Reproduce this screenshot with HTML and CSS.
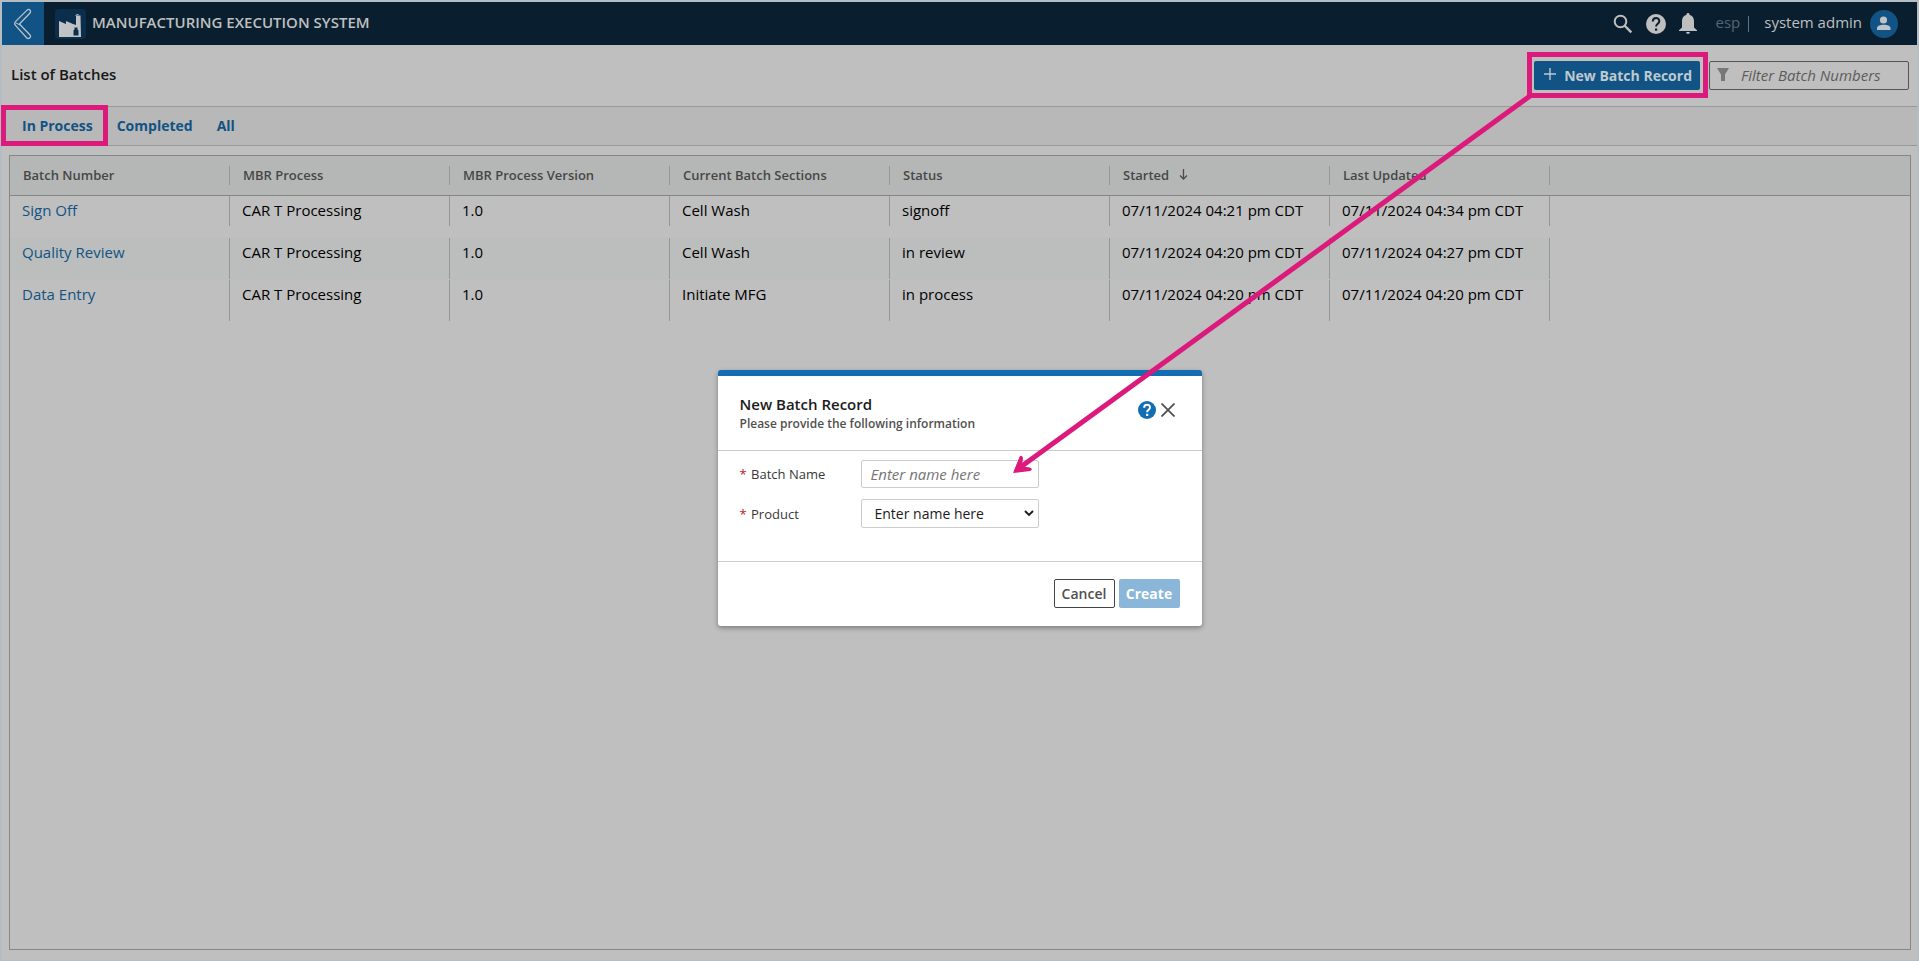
FILE: index.html
```html
<!DOCTYPE html>
<html lang="en">
<head>
<meta charset="utf-8">
<title>Manufacturing Execution System</title>
<link rel="stylesheet" href="styles.css">
</head>
<body>
<div class="app">
  <header class="topbar">
    <button class="back" type="button" aria-label="Back">
      <svg width="20" height="34" viewBox="0 0 20 34"><path d="M14.3 2.9 2.7 14.4Q.7 17 2.7 18.6L13.6 30.8Q15.2 32.4 16.8 30.8T16.800 27.700L6.400 17 16.800 6.300Q18.200 4.600 17 3.100T14.300 2.900Z" fill="none" stroke="#b9c3ca" stroke-width="1.300"/><path d="m2.700 15.800 4.500 2.300" stroke="#b9c3ca"/></svg>
    </button>
    <span class="logo">
      <svg width="31" height="30" viewBox="0 0 31 30"><path d="M4 28V12l7 3v-3l7 3 3 1V6.500h4.500L26 28Z" fill="#bfc3c6"/><path d="M20.500 6.500q1-1 3-1" stroke="#bfc3c6" fill="none"/><path d="M19.500 18.500h3v2l1 1v5h-5v-5l1-1Z" fill="#0b2e4c"/></svg>
    </span>
    <h1 class="product">MANUFACTURING EXECUTION SYSTEM</h1>
    <nav class="tools">
      <button class="tool" type="button" aria-label="Search"><svg width="20" height="20" viewBox="0 0 20 20" fill="none" stroke="#bfbfbf" stroke-width="2"><circle cx="7.500" cy="7.500" r="5.800"/><path d="m11.500 11.500 6.800 6.800" stroke-width="2.400"/></svg></button>
      <button class="tool" type="button" aria-label="Help"><svg width="20" height="20" viewBox="0 0 20 20"><circle cx="10" cy="10" r="10" fill="#bfbfbf"/><path d="M6.800 7.500C6.800 3 13.300 3 13.300 7.200c0 2.600-3.200 2.600-3.200 5.400" fill="none" stroke="#091f2f" stroke-width="2"/><path d="M9 14.500h2.200v2.200H9z" fill="#091f2f"/></svg></button>
      <button class="tool" type="button" aria-label="Notifications"><svg width="18" height="21" viewBox="0 0 18 21" fill="#bfbfbf"><path d="M9 0c1 0 1.500.7 1.500 1.700C13.600 2.500 15 5 15 8v6.500l3 2.700V18H0v-.8l3-2.700V8c0-3 1.400-5.500 4.500-6.300C7.500.7 8 0 9 0ZM7 19h4q-.3 2-2 2t-2-2Z"/></svg></button>
      <span class="tenant">esp</span><span class="bar"></span>
      <span class="user">system admin</span>
      <button class="avatar" type="button" aria-label="Account"><svg width="28" height="28" viewBox="0 0 28 28"><circle cx="14" cy="14" r="14" fill="#105384"/><circle cx="13.500" cy="10" r="3.600" fill="#bfc3c6"/><path d="M7 20v-1.800c0-4.500 13.500-4.500 13.500 0V20Z" fill="#bfc3c6"/></svg></button>
    </nav>
  </header>

  <section class="heading">
    <h2 class="title">List of Batches</h2>
    <button class="new" type="button"><svg class="plus" width="12" height="12" viewBox="0 0 12 12"><path d="M6 0v12M0 6h12" stroke="#bfc9d0" stroke-width="1.400"/></svg>New Batch Record</button>
    <div class="filter">
      <svg width="12" height="13" viewBox="0 0 12 13"><path d="M0 0h12L8 6.500V13H4V6.500Z" fill="#777"/></svg>
      <input class="filter-input" type="text" placeholder="Filter Batch Numbers" aria-label="Filter Batch Numbers">
    </div>
  </section>

  <nav class="tabs">
    <a class="tab" href="#in-process">In Process</a>
    <a class="tab" href="#completed">Completed</a>
    <a class="tab" href="#all">All</a>
  </nav>

  <main class="grid">
    <table class="batches">
      <thead>
        <tr>
          <th class="col"><div class="head">Batch Number</div></th>
          <th class="col"><div class="head">MBR Process</div></th>
          <th class="col"><div class="head">MBR Process Version</div></th>
          <th class="col"><div class="head">Current Batch Sections</div></th>
          <th class="col"><div class="head">Status</div></th>
          <th class="col"><div class="head">Started<svg class="sort" width="9" height="11" viewBox="0 0 9 11"><path d="M4.500 0v10M1 6.500 4.500 10 8 6.500" fill="none" stroke="#4a4c4b" stroke-width="1.300"/></svg></div></th>
          <th class="col"><div class="head">Last Updated</div></th>
          <td></td>
        </tr>
      </thead>
      <tbody>
        <tr>
          <td><div class="cell"><a class="batch" href="#sign-off">Sign Off</a></div></td>
          <td><div class="cell">CAR T Processing</div></td>
          <td><div class="cell">1.0</div></td>
          <td><div class="cell">Cell Wash</div></td>
          <td><div class="cell">signoff</div></td>
          <td><div class="cell">07/11/2024 04:21 pm CDT</div></td>
          <td><div class="cell">07/11/2024 04:34 pm CDT</div></td>
          <td></td>
        </tr>
        <tr>
          <td><div class="cell"><a class="batch" href="#quality-review">Quality Review</a></div></td>
          <td><div class="cell">CAR T Processing</div></td>
          <td><div class="cell">1.0</div></td>
          <td><div class="cell">Cell Wash</div></td>
          <td><div class="cell">in review</div></td>
          <td><div class="cell">07/11/2024 04:20 pm CDT</div></td>
          <td><div class="cell">07/11/2024 04:27 pm CDT</div></td>
          <td></td>
        </tr>
        <tr>
          <td><div class="cell"><a class="batch" href="#data-entry">Data Entry</a></div></td>
          <td><div class="cell">CAR T Processing</div></td>
          <td><div class="cell">1.0</div></td>
          <td><div class="cell">Initiate MFG</div></td>
          <td><div class="cell">in process</div></td>
          <td><div class="cell">07/11/2024 04:20 pm CDT</div></td>
          <td><div class="cell">07/11/2024 04:20 pm CDT</div></td>
          <td></td>
        </tr>
      </tbody>
    </table>
  </main>
</div>

<div class="overlay">
  <form class="dialog" role="dialog" aria-labelledby="dialog-title">
    <div class="dialog-head">
      <div class="dialog-text">
        <h2 class="dialog-title" id="dialog-title">New Batch Record</h2>
        <p class="dialog-sub">Please provide the following information</p>
      </div>
      <button class="tool" type="button" aria-label="Help"><svg width="18" height="18" viewBox="0 0 20 20"><circle cx="10" cy="10" r="10" fill="#126db3"/><path d="M6.800 7.500C6.800 3 13.300 3 13.300 7.200c0 2.600-3.200 2.600-3.200 5.400" fill="none" stroke="#fff" stroke-width="2.200"/><path d="M9 14.200h2.400v2.400H9z" fill="#fff"/></svg></button>
      <button class="tool" type="button" aria-label="Close"><svg width="14" height="14" viewBox="0 0 14 14"><path d="m.5.5 13 13M13.500.5l-13 13" stroke="#505050" stroke-width="1.800"/></svg></button>
    </div>
    <div class="fields">
      <label class="label" for="batch-name"><span class="required">*</span> Batch Name</label>
      <input class="field" id="batch-name" type="text" placeholder="Enter name here">
      <label class="label" for="product"><span class="required">*</span> Product</label>
      <div class="select-wrap">
        <select class="field select" id="product"><option>Enter name here</option></select>
        <svg class="chevron" width="10" height="7" viewBox="0 0 10 7"><path d="m1 1 4 4 4-4" fill="none" stroke="#1c1c1c" stroke-width="1.900"/></svg>
      </div>
    </div>
    <div class="dialog-foot">
      <button class="btn cancel" type="button">Cancel</button>
      <button class="btn create" type="button">Create</button>
    </div>
  </form>
</div>

<svg class="callouts" width="1919" height="500" viewBox="0 0 1919 500" fill="none" stroke="#dc1a7b" stroke-width="5">
  <rect x="3.500" y="107.500" width="102" height="36"/>
  <rect x="1529.500" y="54.500" width="176" height="41"/>
  <path d="M1530 96 1022 466"/>
  <path d="M1013 473 1020 456Q1022 455 1023 458L1022 466 1031 468Q1033 470 1030 471Z" fill="#dc1a7b" stroke="none"/>
  <path d="m1021 458-5 12.500 13-1.500" stroke-width="3" stroke-linecap="round" stroke-linejoin="round"/>
</svg>
</body>
</html>
```
FILE: styles.css
```css
* { box-sizing: border-box; }
body {
  margin: 0;
  background: #bfbfbf;
  color: #000;
  font: 15px/20px "Open Sans", sans-serif;
}
h1, h2, p { margin: 0; }
button, input, select { font: inherit; }
button { border: 0; padding: 0; background: none; }
svg { display: block; flex: none; }

.app {
  min-height: 100vh;
  display: flex;
  flex-direction: column;
  border: 2px solid #b3bdc3;
  border-bottom-width: 1px;
}
.topbar {
  height: 43px;
  display: flex;
  align-items: center;
  padding-right: 19px;
  background: #091f2f;
}
.back {
  width: 42px;
  height: 43px;
  display: grid;
  place-items: center;
  background: #105384;
}
.logo {
  margin: 0 6px 0 11px;
  border-radius: 4px;
  background: #0b2e4c;
}
.product {
  flex: 1;
  padding-bottom: 4px;
  color: #bfbfbf;
  font-size: 15px;
  font-weight: 600;
}
.tools { display: flex; align-items: center; color: #bfbfbf; }
.tools .tool { margin-right: 13px; }
.tenant { margin-left: 6px; padding-bottom: 4px; color: #566572; }
.bar { width: 1px; height: 16px; margin: 0 15px 0 8px; background: #66727c; }
.user { margin-right: 8px; padding-bottom: 4px; }

.heading {
  height: 61px;
  display: flex;
  align-items: center;
  padding: 0 8px 0 9px;
}
.title {
  flex: 1;
  padding-bottom: 4px;
  color: #181818;
  font-size: 15px;
  font-weight: 600;
}
.new {
  height: 29px;
  display: flex;
  align-items: center;
  gap: 8px;
  margin-right: 9px;
  padding: 0 8px 0 10px;
  border-radius: 2px;
  background: #105384;
  color: #bfc9d0;
  font-size: 14px;
  font-weight: 700;
}
.plus { margin-bottom: 3px; }
.filter {
  width: 200px;
  height: 29px;
  display: flex;
  align-items: center;
  padding: 0 0 2px 7px;
  border: 1px solid #555;
  border-radius: 2px;
}
.filter-input {
  flex: 1;
  min-width: 0;
  padding: 0 12px;
  border: 0;
  background: none;
}
.filter-input::placeholder { color: #5c5c5c; font-style: italic; opacity: 1; }

.tabs {
  height: 40px;
  display: flex;
  align-items: center;
  gap: 24px;
  padding-left: 20px;
  border: solid #999;
  border-width: 1px 0;
  background: #b8b8b8;
}
.tab { color: #105384; font-size: 14px; font-weight: 700; text-decoration: none; }

.grid { flex: 1; margin: 9px 6px 10px 7px; border: 1px solid #858786; }
.batches { width: 100%; table-layout: fixed; border-collapse: collapse; }
.batches th, .batches td { padding: 0; text-align: left; vertical-align: top; }
.batches thead { background: #b5b7b6; border-bottom: 1px solid #858786; }
.col { width: 220px; height: 39px; }
.head {
  height: 19px;
  display: flex;
  align-items: center;
  margin-top: 10px;
  padding: 0 0 2px 13px;
  border-right: 1px solid #959796;
  color: #454746;
  font-size: 13px;
  font-weight: 600;
}
.sort { margin-left: 10px; }
.cell {
  height: 41px;
  margin-bottom: 1px;
  padding: 4px 12px;
  border-right: 1px solid #959796;
  white-space: nowrap;
}
.batches tbody tr:first-child .cell { height: 30px; margin-bottom: 12px; }
.batches tbody tr:nth-child(2) td:not(:last-child) { background: #bcbebd; }
.batch { color: #105384; text-decoration: none; }

.overlay {
  position: absolute;
  inset: 0;
  display: flex;
  align-items: center;
  justify-content: center;
  padding-top: 35px;
}
.dialog {
  width: 484px;
  border-top: 6px solid #126db3;
  border-radius: 3px;
  background: #fff;
  box-shadow: 0 2px 5px rgba(0, 0, 0, .35);
}
.dialog-head {
  height: 75px;
  display: flex;
  align-items: center;
  gap: 5px;
  padding: 0 27px 7px 22px;
  border-bottom: 1px solid #ccc;
}
.dialog-text { flex: 1; padding-top: 8px; }
.dialog-title { color: #1c1c1c; font-size: 15px; font-weight: 600; }
.dialog-sub { color: #505050; font-size: 12px; font-weight: 600; }
.fields {
  display: grid;
  grid-template-columns: 121px 178px;
  align-items: center;
  row-gap: 11px;
  padding: 9px 22px 33px;
}
.label { color: #383838; font-size: 13px; }
.required { margin-right: 1px; color: #c01818; }
.field {
  width: 100%;
  height: 28px;
  padding: 0 9px;
  border: 1px solid #ccc;
  border-radius: 2px;
  background: #fff;
  color: #1c1c1c;
  font-size: 15px;
}
.field::placeholder { color: #757575; font-style: italic; opacity: 1; }
.select-wrap { position: relative; }
.select { display: block; height: 29px; padding: 0 13px; font-size: 14px; appearance: none; }
.chevron { position: absolute; right: 5px; top: 11px; pointer-events: none; }
.dialog-foot {
  display: flex;
  justify-content: flex-end;
  gap: 4px;
  padding: 17px 22px 18px;
  border-top: 1px solid #ccc;
}
.btn { width: 61px; height: 29px; border-radius: 2px; font-size: 14px; }
.cancel { border: 1px solid #444; color: #505050; font-weight: 600; }
.create { background: #89b6d9; color: #fff; font-weight: 700; }

.callouts { position: absolute; left: 0; top: 0; pointer-events: none; }
```
